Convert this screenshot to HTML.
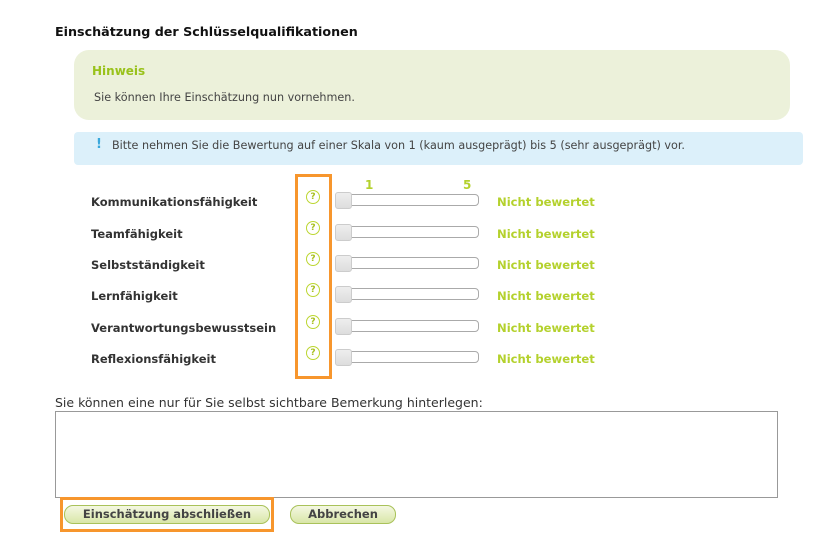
<!DOCTYPE html>
<html><head><meta charset="utf-8"><style>
body{margin:0;width:840px;height:541px;background:#fff;font-family:"DejaVu Sans","Liberation Sans",sans-serif;position:relative;overflow:hidden;color:#333}
.a{position:absolute;white-space:nowrap}
h1{position:absolute;left:55px;top:24px;margin:0;font-size:12.7px;font-weight:bold;color:#111}
.g{position:absolute;left:74px;top:50px;width:716px;height:70px;background:#ecf1da;border-radius:15px}
.b{position:absolute;left:74px;top:132px;width:729px;height:33px;background:#dcf0fa;border-radius:4px}
.lab{position:absolute;left:91px;font-size:11.5px;font-weight:bold;color:#333}
.q{position:absolute;left:306px;width:12px;height:12px;border:1.5px solid #bcd631;border-radius:50%;color:#a8c020;font-size:9px;font-weight:bold;text-align:center;line-height:12px}
.tr{position:absolute;left:335px;width:142px;height:10px;border:1px solid #aaa;border-radius:4px;background:#fff}
.th{position:absolute;left:335px;width:15px;height:15px;border:1px solid #ccc;border-radius:3px;background:linear-gradient(#eee,#ddd)}
.nb{position:absolute;left:497px;font-size:11.6px;font-weight:bold;color:#b4d12d}
.btn{position:absolute;top:505px;height:17px;border:1px solid #a9c25a;border-radius:9px;background:linear-gradient(#f4f8e2,#d9e6a8);font-size:11.5px;font-weight:bold;color:#444;text-align:center;line-height:17px}
</style></head><body>
<h1>Einschätzung der Schlüsselqualifikationen</h1>
<div class="g"></div>
<div class="a" style="left:92px;top:64px;font-size:12px;font-weight:bold;color:#99c21a">Hinweis</div>
<div class="a" style="left:94px;top:91px;font-size:11.2px;color:#444">Sie können Ihre Einschätzung nun vornehmen.</div>
<div class="b"></div>
<div class="a" style="left:96px;top:137px;font-size:13px;font-weight:bold;color:#3aa8dc">!</div>
<div class="a" style="left:112px;top:139px;font-size:11.2px;color:#444">Bitte nehmen Sie die Bewertung auf einer Skala von 1 (kaum ausgeprägt) bis 5 (sehr ausgeprägt) vor.</div>
<div class="a" style="left:365px;top:178px;font-size:12px;font-weight:bold;color:#b4d12d">1</div>
<div class="a" style="left:463px;top:178px;font-size:12px;font-weight:bold;color:#b4d12d">5</div>

<div class="lab" style="top:195px">Kommunikationsfähigkeit</div><div class="q" style="top:190px">?</div><div class="tr" style="top:194px"></div><div class="th" style="top:192px"></div><div class="nb" style="top:195px">Nicht bewertet</div>
<div class="lab" style="top:227px">Teamfähigkeit</div><div class="q" style="top:221px">?</div><div class="tr" style="top:226px"></div><div class="th" style="top:224px"></div><div class="nb" style="top:227px">Nicht bewertet</div>
<div class="lab" style="top:258px">Selbstständigkeit</div><div class="q" style="top:252px">?</div><div class="tr" style="top:257px"></div><div class="th" style="top:255px"></div><div class="nb" style="top:258px">Nicht bewertet</div>
<div class="lab" style="top:289px">Lernfähigkeit</div><div class="q" style="top:283px">?</div><div class="tr" style="top:288px"></div><div class="th" style="top:286px"></div><div class="nb" style="top:289px">Nicht bewertet</div>
<div class="lab" style="top:321px">Verantwortungsbewusstsein</div><div class="q" style="top:315px">?</div><div class="tr" style="top:320px"></div><div class="th" style="top:318px"></div><div class="nb" style="top:321px">Nicht bewertet</div>
<div class="lab" style="top:352px">Reflexionsfähigkeit</div><div class="q" style="top:346px">?</div><div class="tr" style="top:351px"></div><div class="th" style="top:349px"></div><div class="nb" style="top:352px">Nicht bewertet</div>

<div class="a" style="left:295px;top:174px;width:31px;height:199px;border:3px solid #f7962d"></div>

<div class="a" style="left:55px;top:395px;font-size:12.5px;color:#333">Sie können eine nur für Sie selbst sichtbare Bemerkung hinterlegen:</div>
<div class="a" style="left:55px;top:411px;width:721px;height:85px;border:1px solid #999"></div>

<div class="a" style="left:60px;top:497px;width:208px;height:29px;border:3px solid #f7962d"></div>
<div class="btn" style="left:64px;width:204px">Einschätzung abschließen</div>
<div class="btn" style="left:290px;width:104px">Abbrechen</div>
</body></html>
